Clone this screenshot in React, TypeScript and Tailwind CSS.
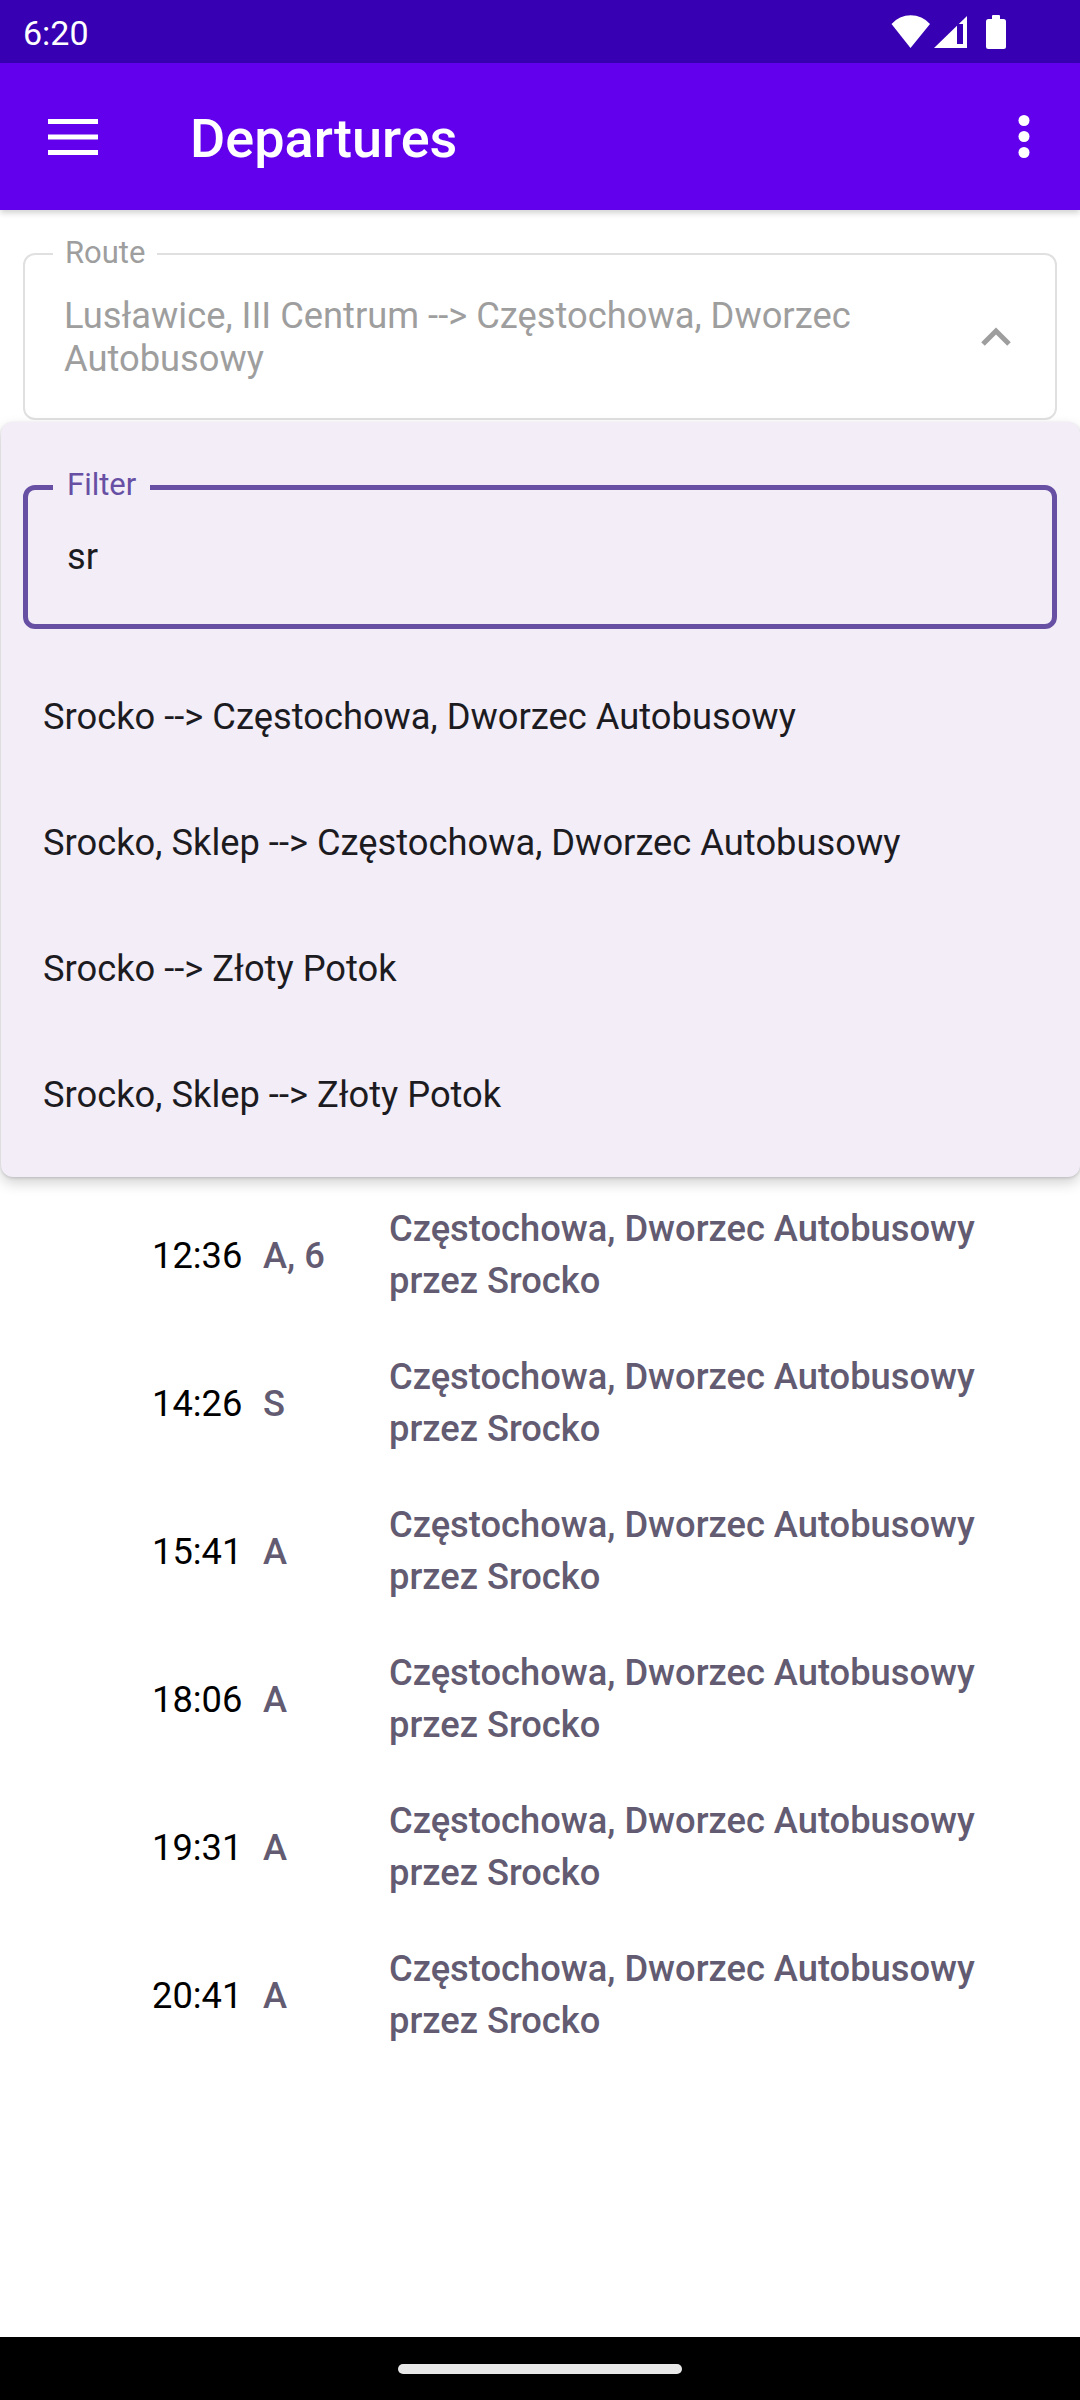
import React from "react";

interface Departure {
  time: string;
  lines: string;
  destination: string;
  via: string;
  hidden?: boolean;
}

// the first rows sit under the open route menu
const departures: Departure[] = [
  { time: "05:46", lines: "A", destination: "Częstochowa, Dworzec Autobusowy", via: "przez Srocko", hidden: true },
  { time: "06:51", lines: "S", destination: "Częstochowa, Dworzec Autobusowy", via: "przez Srocko", hidden: true },
  { time: "08:06", lines: "A", destination: "Częstochowa, Dworzec Autobusowy", via: "przez Srocko", hidden: true },
  { time: "09:41", lines: "A, 6", destination: "Częstochowa, Dworzec Autobusowy", via: "przez Srocko", hidden: true },
  { time: "11:01", lines: "A", destination: "Częstochowa, Dworzec Autobusowy", via: "przez Srocko", hidden: true },
  { time: "12:36", lines: "A, 6", destination: "Częstochowa, Dworzec Autobusowy", via: "przez Srocko" },
  { time: "14:26", lines: "S", destination: "Częstochowa, Dworzec Autobusowy", via: "przez Srocko" },
  { time: "15:41", lines: "A", destination: "Częstochowa, Dworzec Autobusowy", via: "przez Srocko" },
  { time: "18:06", lines: "A", destination: "Częstochowa, Dworzec Autobusowy", via: "przez Srocko" },
  { time: "19:31", lines: "A", destination: "Częstochowa, Dworzec Autobusowy", via: "przez Srocko" },
  { time: "20:41", lines: "A", destination: "Częstochowa, Dworzec Autobusowy", via: "przez Srocko" },
];

const suggestions = [
  "Srocko --> Częstochowa, Dworzec Autobusowy",
  "Srocko, Sklep --> Częstochowa, Dworzec Autobusowy",
  "Srocko --> Złoty Potok",
  "Srocko, Sklep --> Złoty Potok",
];

function StatusBar() {
  return (
    <div className="h-[63px] bg-[#3700B3] flex items-center shrink-0">
      <span className="pl-[23px] pt-[4px] text-[34px] text-white">6:20</span>
      <div className="ml-auto mr-[74px] flex items-center">
        {/* wifi */}
        <svg width="40" height="34" viewBox="0 0 40 34">
          <path d="M19.5 33 L0.5 9 A25.6 25.6 0 0 1 39 9 Z" fill="#fff" />
        </svg>
        {/* signal */}
        <svg width="33" height="32" viewBox="0 0 33 32" className="ml-[3px]">
          <path d="M33 0 L33 32 L0 32 Z" fill="#fff" />
          <rect x="23" y="8" width="6" height="20" fill="#3700B3" />
        </svg>
        {/* battery */}
        <svg width="20" height="34" viewBox="0 0 20 34" className="ml-[19px]">
          <rect x="6" y="0" width="8" height="5" rx="1" fill="#fff" />
          <rect x="0" y="4" width="20" height="30" rx="2.5" fill="#fff" />
        </svg>
      </div>
    </div>
  );
}

function Toolbar() {
  return (
    <div className="h-[147px] bg-[#6200EE] flex items-center shrink-0 shadow-[0_3px_6px_rgba(0,0,0,0.18)] relative z-10">
      <svg width="50" height="36" viewBox="0 0 50 36" className="ml-[48px]">
        <rect x="0" y="0" width="50" height="5" fill="#fff" />
        <rect x="0" y="15.5" width="50" height="5" fill="#fff" />
        <rect x="0" y="31" width="50" height="5" fill="#fff" />
      </svg>
      <h1 className="ml-[92px] pt-[3px] text-[54px] font-medium text-white">Departures</h1>
      <svg width="12" height="44" viewBox="0 0 12 44" className="ml-auto mr-[50px]">
        <circle cx="6" cy="5.5" r="5.5" fill="#fff" />
        <circle cx="6" cy="21.5" r="5.5" fill="#fff" />
        <circle cx="6" cy="37.5" r="5.5" fill="#fff" />
      </svg>
    </div>
  );
}

function RouteField() {
  return (
    <div className="px-[23px] pt-[43px]">
      <div className="relative h-[167px] border-2 border-[#e0e0e0] rounded-[12px] flex items-center">
        <span className="absolute left-[28px] top-[-20px] px-[12px] bg-white text-[31px] leading-[36px] text-[#9e9e9e]">
          Route
        </span>
        <p className="pl-[39px] w-[905px] text-[36.3px] leading-[43px] text-[#9e9e9e]">
          Lusławice, III Centrum --&gt; Częstochowa, Dworzec Autobusowy
        </p>
        <svg width="36" height="22" viewBox="0 0 36 22" className="ml-auto mr-[41px]">
          <polyline points="5,18 18,5 31,18" fill="none" stroke="#9e9e9e" strokeWidth="5" />
        </svg>
      </div>
    </div>
  );
}

function DepartureRow({ d }: { d: Departure }) {
  return (
    <div className={`h-[148px] flex items-center pl-[152px] ${d.hidden ? "invisible" : ""}`}>
      <span className="w-[111px] text-[36.3px] text-black">{d.time}</span>
      <span className="w-[126px] text-[36.3px] font-medium text-[#625B71]">{d.lines}</span>
      <div className="pb-[2px] text-[36.3px] leading-[52px] font-medium text-[#625B71]">
        <div>{d.destination}</div>
        <div>{d.via}</div>
      </div>
    </div>
  );
}

function RouteMenu() {
  return (
    <div className="absolute top-[422px] left-[1px] right-0 h-[755px] bg-[#F3EDF7] rounded-[12px] shadow-[0_6px_14px_rgba(0,0,0,0.18),0_1px_3px_rgba(0,0,0,0.15)] z-20">
      <div className="ml-[22px] mr-[23px] mt-[63px] relative h-[144px] border-[5px] border-[#6750A4] rounded-[12px] flex items-center">
        <span className="absolute left-[25px] top-[-23px] px-[14px] bg-[#F3EDF7] text-[31px] leading-[36px] text-[#6750A4]">
          Filter
        </span>
        <span className="pl-[39px] text-[36.3px] text-[#1C1B1F]">sr</span>
      </div>
      <ul className="mt-[25px]">
        {suggestions.map((s) => (
          <li key={s} className="h-[126px] flex items-center pl-[42px] text-[36.3px] text-[#1C1B1F]">
            {s}
          </li>
        ))}
      </ul>
    </div>
  );
}

export default function App() {
  return (
    <div className="relative w-[1080px] h-[2400px] flex flex-col overflow-hidden bg-white font-[Roboto,sans-serif]">
      <StatusBar />
      <Toolbar />
      <main className="flex-1 bg-white">
        <RouteField />
        <div className="mt-[22px]">
          {departures.map((d) => (
            <DepartureRow key={d.time} d={d} />
          ))}
        </div>
      </main>
      <RouteMenu />
      <div className="h-[63px] bg-black flex items-center justify-center shrink-0">
        <div className="w-[284px] h-[10px] rounded-full bg-[#e8e8e8]" />
      </div>
    </div>
  );
}
